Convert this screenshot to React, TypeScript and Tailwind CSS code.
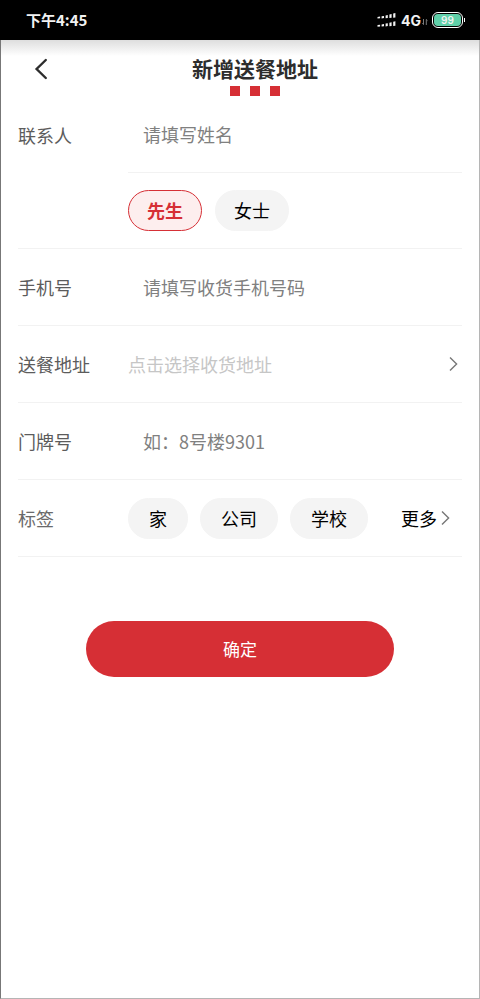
import React, { useState } from "react";
import clsx from "clsx";

type RowProps = {
  label: string;
  htmlFor?: string;
  children: React.ReactNode;
};

const Row = ({ label, htmlFor, children }: RowProps) => (
  <div className="flex h-[77px] items-center border-b border-[#f2f2f2]">
    {htmlFor ? (
      <label htmlFor={htmlFor} className="w-[110px] shrink-0 text-[#5c5c5c]">
        {label}
      </label>
    ) : (
      <span className="w-[110px] shrink-0 text-[#6a6a6a]">{label}</span>
    )}
    {children}
  </div>
);

type ChipProps = {
  name: string;
  text: string;
  checked: boolean;
  onSelect: (value: string) => void;
  className?: string;
};

const Chip = ({ name, text, checked, onSelect, className = "px-5" }: ChipProps) => (
  <label
    className={clsx(
      "flex h-[41px] cursor-pointer items-center rounded-full border",
      className,
      checked
        ? "border-[#d63036] bg-[#fdeeee] font-bold text-[#d62f35]"
        : "border-[#f4f4f4] bg-[#f4f4f4] text-black"
    )}
  >
    <input
      type="radio"
      name={name}
      value={text}
      checked={checked}
      onChange={() => onSelect(text)}
      className="sr-only"
    />
    {text}
  </label>
);

const Arrow = () => (
  <svg width="9" height="16" viewBox="0 0 9 16" fill="none" stroke="#777" strokeWidth="1.4">
    <path d="M1 1.5 7.6 8 1 14.5" />
  </svg>
);

const StatusBar = () => (
  <div className="flex h-10 items-center bg-black pl-[26px] pr-[15px] text-[#f2f2f2]">
    <span className="flex-1 text-[15px] font-bold">下午4:45</span>
    <svg width="20" height="14" viewBox="0 0 20 14" fill="#f2f2f2" className="mr-1">
      <path d="M0.5 3.9l2.6-.4v1.8l-2.6.3zM4.6 3.3l2.4-.4v2.2l-2.4.3zM8.6 2.4l2.2-.4v2.9l-2.2.3zM12.4 1.5l2.2-.4v3.6l-2.2.3zM16.2.6l2.2-.5v4.4l-2.2.3z" />
      <path d="M0.5 12.1l2.6-.4v1.8l-2.6.3zM4.6 11.5l2.4-.4v2.2l-2.4.3zM8.6 10.6l2.2-.4v2.9l-2.2.3zM12.4 9.7l2.2-.4v3.6l-2.2.3zM16.2 8.8l2.2-.5v4.4l-2.2.3z" />
    </svg>
    <span className="font-['Inter',sans-serif] text-[14px] font-bold">4G</span>
    <svg
      width="6"
      height="6"
      viewBox="0 0 6 6"
      fill="none"
      stroke="#999"
      strokeWidth="0.8"
      className="ml-px mt-1"
    >
      <path d="M1.5 0v5.5L0.3 4.3M4.3 6V0.5L5.5 1.7" />
    </svg>
    <div className="ml-1 flex items-center gap-px">
      <div className="h-4 w-[31px] rounded-[6px] border border-white p-px">
        <div className="flex h-full items-center justify-center rounded-[4px] bg-[#5fcfa8] font-['Inter',sans-serif] text-[10px] font-semibold leading-none">
          99
        </div>
      </div>
      <div className="h-1 w-px bg-white" />
    </div>
  </div>
);

const App = () => {
  const [title, setTitle] = useState("先生");
  const [tag, setTag] = useState("");

  return (
    <div className="flex min-h-screen flex-col bg-white font-['Noto_Sans_CJK_SC',sans-serif] text-[18px]">
      <StatusBar />
      <div className="flex-1 border-b border-l border-r border-b-[#b5b5b5] border-l-[#777] border-r-[#b5b5b5] bg-linear-to-b from-[#dedede] to-white to-[16px]">
        <header className="grid h-[57px] grid-cols-[1fr_auto_1fr] items-start pl-[30px]">
          <button aria-label="返回" className="ml-[3px] mt-[18px] w-6">
            <svg
              width="14"
              height="22"
              viewBox="0 0 14 22"
              fill="none"
              stroke="#2d2d2d"
              strokeWidth="2.4"
              strokeLinecap="round"
            >
              <path d="M11.8 2 2.6 11l9.2 9" />
            </svg>
          </button>
          <div className="flex flex-col items-center pt-3">
            <h1 className="text-[21px] font-bold leading-8 text-[#2d2d2d]">新增送餐地址</h1>
            <div className="mt-0.5 flex gap-[10px]">
              <span className="size-[10px] bg-[#d62f35]" />
              <span className="size-[10px] bg-[#d62f35]" />
              <span className="size-[10px] bg-[#d62f35]" />
            </div>
          </div>
        </header>

        <form className="px-[17px]" onSubmit={(e) => e.preventDefault()}>
          {/* contact name + title share one label */}
          <div className="flex border-b border-[#f2f2f2]">
            <label
              htmlFor="name"
              className="flex h-[76px] w-[110px] shrink-0 items-center text-[#5c5c5c]"
            >
              联系人
            </label>
            <div className="min-w-0 flex-1">
              <div className="flex h-[76px] items-center border-b border-[#f2f2f2]">
                <input
                  id="name"
                  placeholder="请填写姓名"
                  className="w-full px-[15px] outline-none placeholder:text-[#808080]"
                />
              </div>
              <div
                role="radiogroup"
                aria-label="称呼"
                className="flex h-[75px] items-center gap-[13px]"
              >
                <Chip
                  name="title"
                  text="先生"
                  checked={title === "先生"}
                  onSelect={setTitle}
                  className="px-[18px]"
                />
                <Chip
                  name="title"
                  text="女士"
                  checked={title === "女士"}
                  onSelect={setTitle}
                  className="px-[18px]"
                />
              </div>
            </div>
          </div>

          <Row label="手机号" htmlFor="phone">
            <input
              id="phone"
              type="tel"
              placeholder="请填写收货手机号码"
              className="w-full min-w-0 px-[15px] outline-none placeholder:text-[#808080]"
            />
          </Row>

          <Row label="送餐地址" htmlFor="address">
            <button
              id="address"
              type="button"
              className="flex flex-1 items-center justify-between pr-1 text-left text-[#c6c6c6]"
            >
              点击选择收货地址
              <Arrow />
            </button>
          </Row>

          <Row label="门牌号" htmlFor="door">
            <input
              id="door"
              placeholder="如：8号楼9301"
              className="w-full min-w-0 px-[15px] outline-none placeholder:text-[#808080]"
            />
          </Row>

          <Row label="标签">
            <div role="radiogroup" aria-label="标签" className="flex flex-1 items-center gap-3">
              <Chip name="tag" text="家" checked={tag === "家"} onSelect={setTag} />
              <Chip name="tag" text="公司" checked={tag === "公司"} onSelect={setTag} />
              <Chip name="tag" text="学校" checked={tag === "学校"} onSelect={setTag} />
            </div>
            <button type="button" className="mr-3 flex items-center gap-1 text-black">
              更多
              <Arrow />
            </button>
          </Row>

          <div className="mt-16 px-[68px]">
            <button
              type="submit"
              className="h-14 w-full rounded-full bg-[#d62f35] text-[17px] text-white"
            >
              确定
            </button>
          </div>
        </form>
      </div>
    </div>
  );
};

export default App;
